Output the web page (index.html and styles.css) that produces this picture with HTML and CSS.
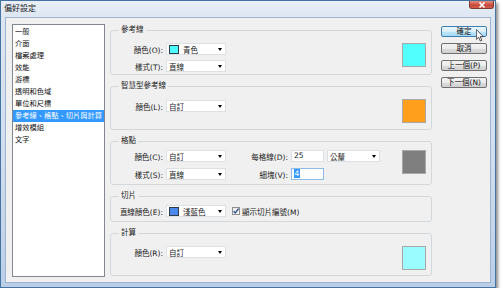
FILE: index.html
```html
<!DOCTYPE html>
<html lang="zh-Hant">
<head>
    <meta charset="UTF-8">
    <title>偏好設定</title>
    <link rel="stylesheet" href="styles.css">
</head>
<body>
    <div class="window">
        <div class="titlebar">
            <span class="title">偏好設定</span>
            <div class="close-btn">
                <svg width="8" height="6" viewBox="0 0 8 6"><path d="M1.5 0.5 L6.5 5.5 M6.5 0.5 L1.5 5.5" stroke="#fff" stroke-width="1.6"/></svg>
            </div>
        </div>

        <div class="client">
            <ul class="category-list">
                <li>一般</li>
                <li>介面</li>
                <li>檔案處理</li>
                <li>效能</li>
                <li>游標</li>
                <li>透明和色域</li>
                <li>單位和尺標</li>
                <li class="selected">參考線、格點、切片與計算</li>
                <li>增效模組</li>
                <li>文字</li>
            </ul>

            <div class="groups">
                <fieldset class="group group-guides">
                    <legend>參考線</legend>
                    <div class="group-body">
                        <div class="rows">
                            <div class="row">
                                <label>顏色(O):</label>
                                <div class="combo"><span class="chip chip-cyan"></span>青色<span class="arrow"></span></div>
                            </div>
                            <div class="row">
                                <label>樣式(T):</label>
                                <div class="combo">直線<span class="arrow"></span></div>
                            </div>
                        </div>
                        <div class="preview preview-cyan"></div>
                    </div>
                </fieldset>

                <fieldset class="group group-smart">
                    <legend>智慧型參考線</legend>
                    <div class="group-body">
                        <div class="rows">
                            <div class="row">
                                <label>顏色(L):</label>
                                <div class="combo">自訂<span class="arrow"></span></div>
                            </div>
                        </div>
                        <div class="preview preview-orange"></div>
                    </div>
                </fieldset>

                <fieldset class="group group-grid">
                    <legend>格點</legend>
                    <div class="group-body">
                        <div class="rows">
                            <div class="row">
                                <label>顏色(C):</label>
                                <div class="combo">自訂<span class="arrow"></span></div>
                                <label class="label-wide">每格線(D):</label>
                                <div class="field">25</div>
                                <div class="combo combo-units">公釐<span class="arrow"></span></div>
                            </div>
                            <div class="row">
                                <label>樣式(S):</label>
                                <div class="combo">直線<span class="arrow"></span></div>
                                <label class="label-wide">細塊(V):</label>
                                <div class="field focused"><span class="sel-text">4</span></div>
                            </div>
                        </div>
                        <div class="preview preview-gray"></div>
                    </div>
                </fieldset>

                <fieldset class="group group-slices">
                    <legend>切片</legend>
                    <div class="group-body">
                        <div class="rows">
                            <div class="row">
                                <label>直線顏色(E):</label>
                                <div class="combo"><span class="chip chip-blue"></span>淺藍色<span class="arrow"></span></div>
                                <span class="checkbox">
                                    <svg width="8" height="8" viewBox="0 0 8 8"><path d="M1.6 4.2 L3.3 6 L6.6 1.6" fill="none" stroke="#2b4f8a" stroke-width="1.3"/></svg>
                                </span>
                                <span class="check-label">顯示切片編號(M)</span>
                            </div>
                        </div>
                    </div>
                </fieldset>

                <fieldset class="group group-count">
                    <legend>計算</legend>
                    <div class="group-body">
                        <div class="rows">
                            <div class="row">
                                <label>顏色(R):</label>
                                <div class="combo">自訂<span class="arrow"></span></div>
                            </div>
                        </div>
                        <div class="preview preview-lightcyan"></div>
                    </div>
                </fieldset>
            </div>

            <div class="buttons">
                <div class="btn default">確定</div>
                <div class="btn">取消</div>
                <div class="btn">上一個(P)</div>
                <div class="btn">下一個(N)</div>
            </div>
        </div>

        <!-- mouse pointer over the OK button -->
        <svg class="cursor" width="8" height="13" viewBox="0 0 12 19">
            <path d="M0.5 0.5 L0.5 15.5 L4 12 L6.5 17.8 L8.8 16.8 L6.3 11.2 L11 11.2 Z" fill="#fff" stroke="#000" stroke-width="1"/>
        </svg>
    </div>
</body>
</html>
```

FILE: styles.css
```css
body {
    margin: 0;
    background: #fff;
    font-family: "DejaVu Sans", "Noto Sans CJK TC", sans-serif;
    font-size: 7.5px;
    color: #1a1a1a;
}
.window {
    position: relative;
    width: 496px;
    height: 288px;
    box-sizing: border-box;
    border: 1px solid #46739f;
    background: linear-gradient(#dfe8f3 0%, #cddcee 60%, #b9cfe8 100%);
    box-shadow: 2px 3px 3px rgba(0,0,0,0.45);
    display: flex;
    flex-direction: column;
}
.titlebar {
    height: 16px;
    display: flex;
    align-items: flex-start;
    background: linear-gradient(#e9eff7, #dce6f2);
}
.title {
    font-size: 8px;
    line-height: 16px;
    padding-left: 3px;
    color: #222;
}
.close-btn {
    margin-left: auto;
    margin-right: 1px;
    width: 25px;
    height: 8px;
    box-sizing: border-box;
    border: 1px solid #7d3a33;
    border-top: none;
    border-radius: 0 0 3px 3px;
    background: linear-gradient(#e3917f, #c8473a 60%, #d2604c);
    display: flex;
    align-items: center;
    justify-content: center;
}
.close-btn svg {
    display: block;
}
.client {
    flex: 1;
    margin: 0 4px 4px 4px;
    border: 1px solid #9fb3ca;
    background: #f0f0f0;
    padding: 6px 3px 5px 6px;
    display: flex;
}
.category-list {
    list-style: none;
    margin: 0;
    padding: 1px 0 0 0;
    width: 93px;
    box-sizing: border-box;
    border: 1px solid #828790;
    background: #fff;
    font-size: 7.25px;
}
.category-list li {
    height: 12px;
    line-height: 12px;
    padding-left: 2px;
    white-space: nowrap;
    color: #111;
}
.category-list li.selected {
    background: #3399ff;
    color: #fff;
}
.groups {
    width: 322px;
    margin-left: 5px;
    display: flex;
    flex-direction: column;
    gap: 5px;
}
.group {
    margin: 0;
    padding: 0;
    min-width: 0;
    box-sizing: border-box;
    border: 1px solid #d3d8dc;
    border-radius: 3px;
}
.group legend {
    margin-left: 8px;
    padding: 0 2px;
    line-height: 12px;
    color: #222;
}
.group-guides { height: 51px; padding-top: 6px; }
.group-smart { height: 50px; padding-top: 7px; }
.group-grid { height: 50px; padding-top: 2px; }
.group-slices { height: 32px; padding-top: 2px; }
.group-count { height: 49px; padding-top: 6px; }
.group-body {
    display: flex;
    align-items: flex-start;
}
.rows {
    display: flex;
    flex-direction: column;
    gap: 3px;
}
.group-grid .rows {
    gap: 4px;
}
.row {
    height: 14px;
    display: flex;
    align-items: center;
    gap: 3px;
}
.row label {
    width: 52px;
    text-align: right;
    white-space: nowrap;
}
.row label.label-wide {
    width: 59px;
}
.combo {
    width: 60px;
    height: 12px;
    box-sizing: border-box;
    border: 1px solid #dde1e6;
    background: #fff;
    display: flex;
    align-items: center;
    padding-left: 2px;
    white-space: nowrap;
}
.combo-units {
    width: 53px;
}
.arrow {
    margin-left: auto;
    margin-right: 3px;
    width: 0;
    height: 0;
    border-left: 2.5px solid transparent;
    border-right: 2.5px solid transparent;
    border-top: 3px solid #000;
}
.chip {
    width: 10px;
    height: 9px;
    box-sizing: border-box;
    border: 1px solid #2e3a44;
    margin-right: 4px;
}
.chip-cyan { background: #4dfcff; }
.chip-blue { background: #4a88f0; }
.field {
    width: 33px;
    height: 12px;
    box-sizing: border-box;
    border: 1px solid #dde1e6;
    background: #fff;
    padding-left: 2px;
    line-height: 10px;
}
.field.focused {
    border-color: #8fbbe8;
}
.sel-text {
    background: #3399ff;
    color: #fff;
    padding: 0 0.5px;
}
.checkbox {
    margin-left: 3px;
    width: 8px;
    height: 8px;
    box-sizing: border-box;
    border: 1px solid #8e8f8f;
    background: linear-gradient(#e8e8e8, #fdfdfd);
    display: flex;
    align-items: center;
    justify-content: center;
}
.checkbox svg {
    display: block;
    flex: none;
}
.check-label {
    margin-left: -1px;
    white-space: nowrap;
}
.preview {
    margin-left: auto;
    margin-right: 5px;
    margin-top: 1px;
    width: 24px;
    height: 24px;
    box-sizing: border-box;
    border: 1px solid #a8a8a8;
}
.group-smart .preview { margin-top: 0; }
.preview-cyan { background: #52ffff; }
.preview-orange { background: #ff9f1c; }
.preview-gray { background: #7f7f7f; }
.preview-lightcyan { background: #9bfcff; }
.buttons {
    width: 46px;
    margin-left: 9px;
    margin-top: 2px;
    display: flex;
    flex-direction: column;
    gap: 6px;
}
.btn {
    height: 11px;
    box-sizing: border-box;
    border: 1px solid #707070;
    border-radius: 2px;
    background: linear-gradient(#f2f2f2 0%, #ebebeb 50%, #dddddd 51%, #cfcfcf 100%);
    text-align: center;
    line-height: 9px;
    white-space: nowrap;
    color: #111;
}
.btn.default {
    border-color: #3c7fb1;
    background: linear-gradient(#eaf6fd 0%, #d9f0fc 50%, #bee6fd 51%, #a7d9f5 100%);
}
.cursor {
    position: absolute;
    left: 475px;
    top: 28px;
}
```
